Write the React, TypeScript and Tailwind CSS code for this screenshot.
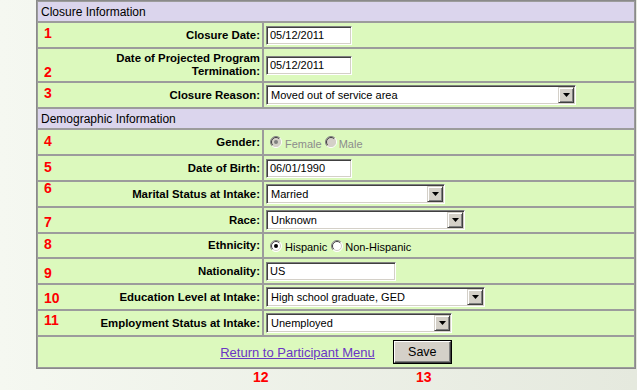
import React from "react";

type Kids = { children?: React.ReactNode };

function Row({ h, label, children }: { h: string; label: React.ReactNode; children?: React.ReactNode }) {
  return (
    <div className={`flex ${h}`}>
      <div className="w-[226px] shrink-0 border border-[#9c9c9c] bg-[#dcf9bd] flex items-center justify-end pr-[2px] text-right text-[11.4px] leading-[13px] font-bold text-black">
        <span>{label}</span>
      </div>
      <div className="flex-1 border border-[#9c9c9c] bg-[#dcf9bd] flex items-center pl-[2px]">{children}</div>
    </div>
  );
}

function Header({ children }: Kids) {
  return (
    <div className="h-[21px] border border-[#9c9c9c] bg-[#dbd5ed] flex items-center pl-[3px] text-[12px] leading-[14px] text-black">
      {children}
    </div>
  );
}

function TextBox({ w, value }: { w: string; value: string }) {
  return (
    <div
      className={`${w} h-[19px] bg-white border border-t-[#808080] border-l-[#808080] border-b-white border-r-white shadow-[inset_1px_1px_0_#404040,inset_-1px_-1px_0_#d4d0c8] flex items-center pl-[3px] text-[11px] leading-[13px] text-black`}
    >
      {value}
    </div>
  );
}

function Select({ w, value }: { w: string; value: string }) {
  return (
    <div
      className={`${w} h-[20px] bg-white border border-t-[#808080] border-l-[#808080] border-b-white border-r-white shadow-[inset_1px_1px_0_#404040,inset_-1px_-1px_0_#d4d0c8] flex p-[1px]`}
    >
      <div className="flex-1 flex items-center pl-[3px] text-[11px] leading-[13px] text-black">{value}</div>
      <div className="w-[16px] h-[16px] bg-[#d4d0c8] border border-t-[#d4d0c8] border-l-[#d4d0c8] border-b-[#404040] border-r-[#404040] shadow-[inset_1px_1px_0_#ffffff,inset_-1px_-1px_0_#808080] flex items-center justify-center">
        <svg width="7" height="4" viewBox="0 0 7 4">
          <path d="M0 0 H7 L3.5 4 Z" fill="#000" />
        </svg>
      </div>
    </div>
  );
}

function Radio({ checked, disabled }: { checked?: boolean; disabled?: boolean }) {
  const fill = disabled ? "#d4d0c8" : "#ffffff";
  const dot = disabled ? "#808080" : "#000000";
  return (
    <svg width="12" height="12" viewBox="0 0 12 12" className="shrink-0">
      <circle cx="6" cy="6" r="5.5" fill={fill} />
      <path d="M2.1 9.9 A5.5 5.5 0 0 1 9.9 2.1" stroke="#808080" strokeWidth="1" fill="none" />
      <path d="M2.8 9.2 A4.5 4.5 0 0 1 9.2 2.8" stroke="#404040" strokeWidth="1" fill="none" />
      <path d="M9.9 2.1 A5.5 5.5 0 0 1 2.1 9.9" stroke="#ffffff" strokeWidth="1" fill="none" />
      <path d="M9.2 2.8 A4.5 4.5 0 0 1 2.8 9.2" stroke="#d4d0c8" strokeWidth="1" fill="none" />
      {checked && <circle cx="6" cy="6" r="2" fill={dot} />}
    </svg>
  );
}

function Num({ n, cls }: { n: string; cls: string }) {
  return (
    <span className={`absolute ${cls} text-[14px] leading-[14px] font-bold text-[#ff0000]`}>{n}</span>
  );
}

export default function App() {
  return (
    <div className="relative w-[637px] h-[390px] overflow-hidden bg-gradient-to-r from-[#f5f8f1] to-[#e5e9de] font-['Liberation_Sans',Arial,sans-serif]">
      <div className="ml-[36px] w-[600px] border border-[#8a8a8a] flex flex-col">
        <Header>Closure Information</Header>
        <Row h="h-[26px]" label="Closure Date:">
          <TextBox w="w-[86px]" value="05/12/2011" />
        </Row>
        <Row
          h="h-[34px]"
          label={
            <>
              Date of Projected Program
              <br />
              Termination:
            </>
          }
        >
          <TextBox w="w-[86px]" value="05/12/2011" />
        </Row>
        <Row h="h-[26px]" label="Closure Reason:">
          <Select w="w-[310px]" value="Moved out of service area" />
        </Row>
        <Header>Demographic Information</Header>
        <Row h="h-[26px]" label="Gender:">
          <div className="flex items-center ml-[4px] text-[11px] leading-[13px] text-[#8c8c8c]">
            <Radio checked disabled />
            <span className="pt-[4px] ml-[3px]">Female</span>
            <span className="ml-[3px]">
              <Radio disabled />
            </span>
            <span className="pt-[4px] ml-[2px]">Male</span>
          </div>
        </Row>
        <Row h="h-[26px]" label="Date of Birth:">
          <TextBox w="w-[86px]" value="06/01/1990" />
        </Row>
        <Row h="h-[26px]" label="Marital Status at Intake:">
          <Select w="w-[179px]" value="Married" />
        </Row>
        <Row h="h-[26px]" label="Race:">
          <Select w="w-[199px]" value="Unknown" />
        </Row>
        <Row h="h-[25px]" label="Ethnicity:">
          <div className="flex items-center ml-[4px] text-[11px] leading-[13px] text-black">
            <Radio checked />
            <span className="pt-[4px] ml-[3px]">Hispanic</span>
            <span className="ml-[4px]">
              <Radio />
            </span>
            <span className="pt-[4px] ml-[2px]">Non-Hispanic</span>
          </div>
        </Row>
        <Row h="h-[26px]" label="Nationality:">
          <TextBox w="w-[130px]" value="US" />
        </Row>
        <Row h="h-[26px]" label="Education Level at Intake:">
          <Select w="w-[219px]" value="High school graduate, GED" />
        </Row>
        <Row h="h-[26px]" label="Employment Status at Intake:">
          <Select w="w-[186px]" value="Unemployed" />
        </Row>
        <div className="h-[32px] border border-[#9c9c9c] bg-[#dcf9bd] flex items-center justify-center gap-[18px]">
          <a href="#" className="text-[13px] leading-[15px] text-[#6a35c4] underline">
            Return to Participant Menu
          </a>
          <div className="w-[59px] h-[24px] border border-black">
            <div className="w-full h-full bg-[#d4d0c8] border border-t-white border-l-white border-b-[#404040] border-r-[#404040] shadow-[inset_-1px_-1px_0_#808080] flex items-center justify-center text-[12.5px] leading-[15px] text-black">
              Save
            </div>
          </div>
        </div>
      </div>

      <Num n="1" cls="left-[44px] top-[26px]" />
      <Num n="2" cls="left-[44px] top-[65px]" />
      <Num n="3" cls="left-[44px] top-[86px]" />
      <Num n="4" cls="left-[44px] top-[134px]" />
      <Num n="5" cls="left-[44px] top-[160px]" />
      <Num n="6" cls="left-[44px] top-[181px]" />
      <Num n="7" cls="left-[44px] top-[215px]" />
      <Num n="8" cls="left-[44px] top-[237px]" />
      <Num n="9" cls="left-[44px] top-[266px]" />
      <Num n="10" cls="left-[44px] top-[291px]" />
      <Num n="11" cls="left-[44px] top-[313px]" />
      <Num n="12" cls="left-[253px] top-[370px]" />
      <Num n="13" cls="left-[416px] top-[370px]" />
    </div>
  );
}
